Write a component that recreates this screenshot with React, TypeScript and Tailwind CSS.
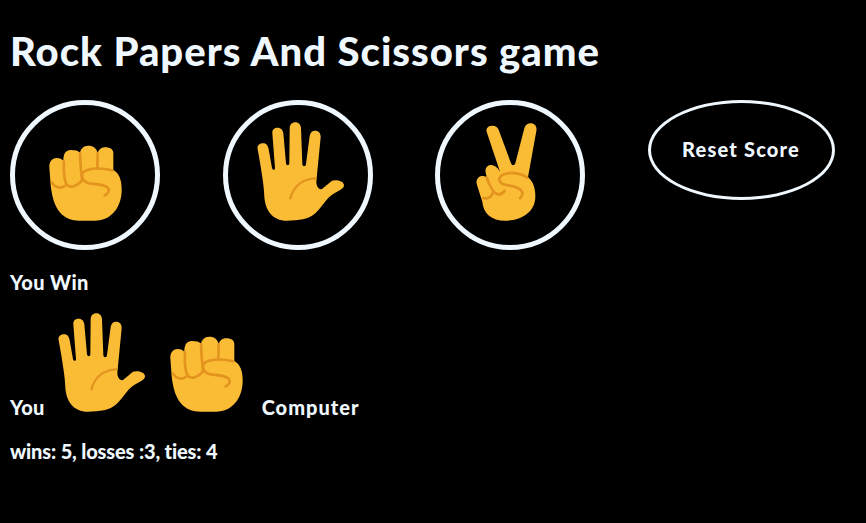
const FIST_BOX = '105 105 300 300'
const HAND_BOX = '98 105 300 300'
const VEE_BOX = '90 105 300 300'

function Fist({ className }: { className?: string }) {
  return (
    <svg viewBox={FIST_BOX} className={className}>
      <path fill="#fbbc35" d="M152 285C158 340 175 392 240 392L285 392C335 392 365 350 365 300C365 270 358 250 340 240L340 190C340 178 330 172 316 172C303 172 295 180 293 190C290 175 280 167 265 167C250 167 242 177 240 188C235 182 225 180 212 180C198 180 190 190 190 212C186 208 180 204 170 204C155 204 147 217 148 232Z" />
      <g fill="none" stroke="#e2941f" strokeWidth="8" strokeLinecap="round">
        <path d="M156 278C165 292 182 298 194 288" />
        <path d="M192 215C190 250 192 270 200 284C210 296 232 288 246 272" />
        <path d="M240 190C241 220 243 245 246 268" />
        <path d="M293 190L292 235" />
        <path d="M336 241C310 234 270 232 250 246C240 262 250 278 275 281C310 284 332 290 325 306C322 312 318 314 314 316" />
      </g>
    </svg>
  )
}

function Hand({ className }: { className?: string }) {
  return (
    <svg viewBox={HAND_BOX} className={className}>
      <path fill="#fbbc35" d="M127 178C124 165 134 160 144 160C154 160 158 168 160 178L170 234C171 241 180 241 179 234L171 130C170 118 178 113 187 113C197 113 203 120 204 130L212 220C213 228 222 228 222 220L223 115C223 104 230 97 240 97C250 97 257 105 257 115L261 222C262 231 271 231 272 222L283 138C285 127 291 122 299 122C310 122 317 130 316 142L303 275C303 290 312 300 320 297L350 272C362 268 385 272 386 285C386 295 375 300 360 308C335 320 325 345 300 370C280 388 250 392 215 392C170 392 150 360 147 320C146 290 140 250 127 178Z" />
      <path fill="none" stroke="#e2941f" strokeWidth="7" strokeLinecap="round" d="M225 325C235 290 255 268 300 265" />
    </svg>
  )
}

function Vee({ className }: { className?: string }) {
  return (
    <svg viewBox={VEE_BOX} className={className}>
      <path fill="#fbbc35" d="M170 125C167 112 178 107 188 107C197 107 204 112 207 122L243 220C246 228 253 228 256 220L283 115C286 105 293 100 302 100C314 100 322 110 319 123L294 262C310 275 316 295 316 320C316 365 275 392 225 392C185 392 160 370 157 335L141 285C136 270 145 258 157 258C162 258 167 260 171 264L167 248C164 235 172 225 183 225C193 225 203 232 210 245Z" />
      <g fill="none" stroke="#e2941f" strokeWidth="8" strokeLinecap="round">
        <path d="M160 324C172 328 184 322 188 310" />
        <path d="M170 262C178 285 190 312 205 313C214 314 220 308 224 302" />
        <path d="M291 262C270 248 235 244 215 256C200 270 210 284 235 286C262 290 282 300 276 316C274 320 272 323 270 325" />
      </g>
    </svg>
  )
}

function ChoiceButton({ children }: { children: React.ReactNode }) {
  return (
    <button className="flex h-[150px] w-[150px] items-center justify-center rounded-full border-[5px] border-[#f0f8ff] bg-black">
      {children}
    </button>
  )
}

export default function App() {
  return (
    <div className="h-[523px] overflow-hidden bg-black px-[10px] font-['Lato',sans-serif] font-black text-[#f0f8ff]">
      <h1 className="pt-[26px] text-[40px] leading-[50px] tracking-[1px]">Rock Papers And Scissors game</h1>
      <div className="mt-6 grid w-[850px] grid-cols-4">
        <ChoiceButton><Fist className="h-[100px] w-[100px] shrink-0 overflow-visible" /></ChoiceButton>
        <ChoiceButton><Hand className="h-[100px] w-[100px] shrink-0 overflow-visible" /></ChoiceButton>
        <ChoiceButton><Vee className="h-[100px] w-[100px] shrink-0 overflow-visible" /></ChoiceButton>
        <button className="h-[100px] w-[187px] rounded-[50%] border-[3px] border-[#f0f8ff] pb-[2px] text-xl font-black tracking-[1.2px]">
          Reset Score
        </button>
      </div>
      <p className="mt-5 text-xl leading-[25px] tracking-[0.4px]">You Win</p>
      <div className="mt-[21px] flex items-end text-xl leading-[25px]">
        <span className="mb-[-4px] tracking-[0.3px]">You</span>
        <Hand className="ml-1 h-[100px] w-[100px] overflow-visible" />
        <Fist className="ml-[7px] h-[100px] w-[100px] overflow-visible" />
        <span className="mb-[-4px] ml-1.5 tracking-[1px]">Computer</span>
      </div>
      <p className="mt-[23px] text-xl leading-[25px] tracking-[-0.15px]">wins: 5, losses :3, ties: 4</p>
    </div>
  )
}
